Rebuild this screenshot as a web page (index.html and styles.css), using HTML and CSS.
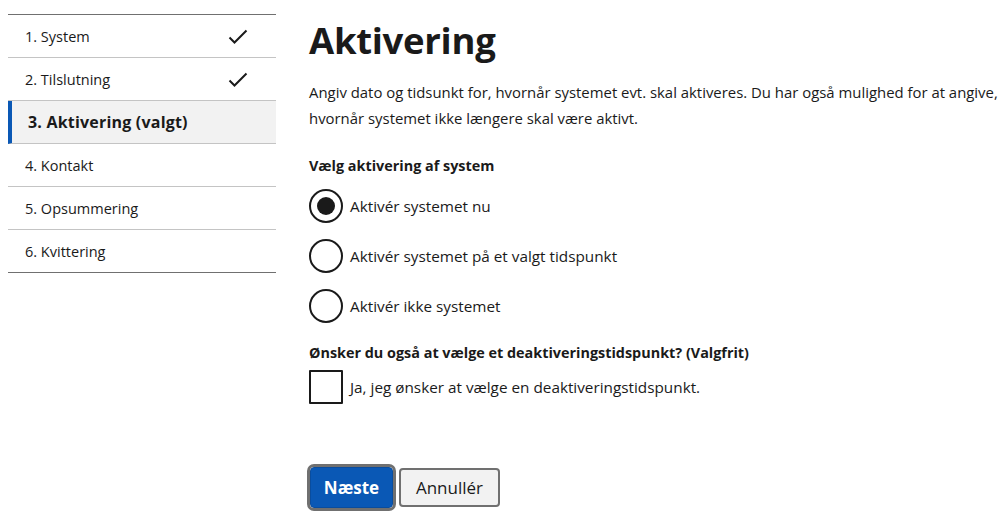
FILE: index.html
```html
<!DOCTYPE html>
<html lang="da">
<head>
<meta charset="utf-8">
<title>Aktivering</title>
<link rel="stylesheet" href="styles.css">
</head>
<body>
<div class="page">
  <nav class="steps">
    <div class="step done"><span>1. System</span><svg class="check" viewBox="0 0 20 16" width="20" height="16"><polyline points="1.5,8.5 6.5,13.5 18.5,1.5" fill="none" stroke="#1a1a1a" stroke-width="2"/></svg></div>
    <div class="step done"><span>2. Tilslutning</span><svg class="check" viewBox="0 0 20 16" width="20" height="16"><polyline points="1.5,8.5 6.5,13.5 18.5,1.5" fill="none" stroke="#1a1a1a" stroke-width="2"/></svg></div>
    <div class="step active"><span>3. Aktivering (valgt)</span></div>
    <div class="step"><span>4. Kontakt</span></div>
    <div class="step"><span>5. Opsummering</span></div>
    <div class="step last"><span>6. Kvittering</span></div>
  </nav>
  <main class="content">
    <h1 class="title">Aktivering</h1>
    <p class="intro">Angiv dato og tidsunkt for, hvornår systemet evt. skal aktiveres. Du har også mulighed for at angive, hvornår systemet ikke længere skal være aktivt.</p>
    <div class="group">
      <div class="group-label">Vælg aktivering af system</div>
      <label class="radio first"><span class="circle checked"></span><span>Aktivér systemet nu</span></label>
      <label class="radio"><span class="circle"></span><span>Aktivér systemet på et valgt tidspunkt</span></label>
      <label class="radio"><span class="circle"></span><span>Aktivér ikke systemet</span></label>
    </div>
    <div class="group second">
      <div class="group-label">Ønsker du også at vælge et deaktiveringstidspunkt? (Valgfrit)</div>
      <label class="checkbox"><span class="box"></span><span>Ja, jeg ønsker at vælge en deaktiveringstidspunkt.</span></label>
    </div>
    <div class="actions">
      <button class="btn primary">Næste</button>
      <button class="btn secondary">Annullér</button>
    </div>
  </main>
</div>
</body>
</html>
```

FILE: styles.css
```css
html, body {
  margin: 0;
  padding: 0;
  background: #ffffff;
}
body {
  padding: 8px 0 8px 8px;
  font-family: "Open Sans", "Noto Sans", "Liberation Sans", sans-serif;
  color: #1a1a1a;
  font-size: 15px;
  overflow: hidden;
}
.page {
  display: flex;
  gap: 33px;
}
.steps {
  width: 268px;
  flex: none;
  margin-top: 6px;
  border-top: 1px solid #707070;
}
.step {
  height: 42px;
  border-bottom: 1px solid #c4c4c4;
  display: flex;
  align-items: center;
  justify-content: space-between;
  padding: 0 28px 0 17px;
  font-size: 14.5px;
}
.step.last {
  border-bottom-color: #707070;
}
.step.active {
  background: #f2f2f2;
  border-left: 4px solid #0a58b5;
  padding-left: 16px;
  font-weight: 700;
  font-size: 16px;
  letter-spacing: 0.2px;
}
.check {
  display: block;
  margin-top: 1px;
}
.content {
  flex: 1;
  min-width: 0;
}
.title {
  margin: 7px 0 0 0;
  font-size: 36.5px;
  line-height: 50px;
  font-weight: 700;
  letter-spacing: -0.3px;
}
.intro {
  margin: 14px 0 0 0;
  line-height: 26px;
  font-size: 14.9px;
}
.group {
  margin-top: 25px;
}
.group-label {
  font-weight: 700;
  font-size: 14.4px;
  line-height: 20px;
  margin-bottom: 9px;
}
.radio, .checkbox {
  display: flex;
  align-items: center;
  gap: 7px;
  font-size: 15.3px;
}
.radio {
  height: 50px;
}
.radio.first {
  margin-top: -4px;
}
.circle {
  width: 30px;
  height: 30px;
  border: 2px solid #1a1a1a;
  border-radius: 50%;
  flex: none;
  display: flex;
  align-items: center;
  justify-content: center;
}
.circle.checked::after {
  content: "";
  width: 18px;
  height: 18px;
  border-radius: 50%;
  background: #1a1a1a;
}
.second {
  margin-top: 12px;
}
.second .group-label {
  margin-bottom: 0;
}
.checkbox {
  height: 40px;
  margin-top: 4px;
}
.box {
  width: 30px;
  height: 30px;
  border: 2px solid #1a1a1a;
  border-radius: 1px;
  flex: none;
}
.actions {
  display: flex;
  gap: 6px;
  margin-top: 60px;
  align-items: center;
}
.btn {
  font-family: inherit;
  font-size: 17px;
  border-radius: 4px;
  cursor: pointer;
  padding: 0;
}
.btn.primary {
  background: #0a58b5;
  color: #ffffff;
  border: 1px solid #0a4d9e;
  height: 41px;
  width: 83px;
  margin-left: 1px;
  outline: 3px solid #707070;
  outline-offset: 0;
  font-weight: 700;
}
.btn.secondary {
  background: #f2f2f2;
  color: #1a1a1a;
  border: 2px solid #707070;
  height: 39px;
  width: 101px;
  font-weight: 500;
}
```
